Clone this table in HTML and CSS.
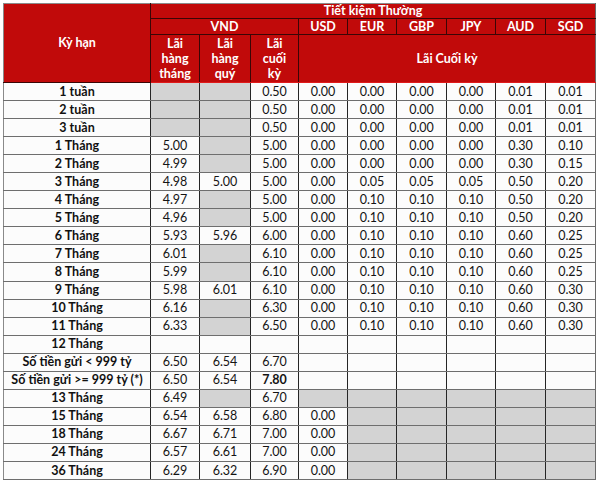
FILE: index.html
```html
<!DOCTYPE html>
<html lang="vi">
<head>
<meta charset="utf-8">
<title>Lãi suất tiết kiệm</title>
<link rel="stylesheet" href="styles.css">
</head>
<body>
<table class="rates">
<colgroup>
<col class="c-term"><col class="c49"><col class="c51"><col class="c48"><col class="c49"><col class="c49"><col class="c50"><col class="c49"><col class="c50"><col class="c50">
</colgroup>
<thead>
<tr class="h1"><th rowspan="3" class="term-h">Kỳ hạn</th><th colspan="9">Tiết kiệm Thường</th></tr>
<tr class="h2"><th colspan="3">VND</th><th>USD</th><th>EUR</th><th>GBP</th><th>JPY</th><th>AUD</th><th>SGD</th></tr>
<tr class="h3"><th>Lãi<br>hàng<br>tháng</th><th>Lãi<br>hàng<br>quý</th><th>Lãi<br>cuối<br>kỳ</th><th colspan="6">Lãi Cuối kỳ</th></tr>
</thead>
<tbody>
<tr><td class="lbl">1 tuần</td><td class="g"></td><td class="g"></td><td>0.50</td><td>0.00</td><td>0.00</td><td>0.00</td><td>0.00</td><td>0.01</td><td>0.01</td></tr>
<tr><td class="lbl">2 tuần</td><td class="g"></td><td class="g"></td><td>0.50</td><td>0.00</td><td>0.00</td><td>0.00</td><td>0.00</td><td>0.01</td><td>0.01</td></tr>
<tr><td class="lbl">3 tuần</td><td class="g"></td><td class="g"></td><td>0.50</td><td>0.00</td><td>0.00</td><td>0.00</td><td>0.00</td><td>0.01</td><td>0.01</td></tr>
<tr><td class="lbl">1 Tháng</td><td>5.00</td><td class="g"></td><td>5.00</td><td>0.00</td><td>0.00</td><td>0.00</td><td>0.00</td><td>0.30</td><td>0.10</td></tr>
<tr><td class="lbl">2 Tháng</td><td>4.99</td><td class="g"></td><td>5.00</td><td>0.00</td><td>0.00</td><td>0.00</td><td>0.00</td><td>0.30</td><td>0.15</td></tr>
<tr><td class="lbl">3 Tháng</td><td>4.98</td><td>5.00</td><td>5.00</td><td>0.00</td><td>0.05</td><td>0.05</td><td>0.05</td><td>0.50</td><td>0.20</td></tr>
<tr><td class="lbl">4 Tháng</td><td>4.97</td><td class="g"></td><td>5.00</td><td>0.00</td><td>0.10</td><td>0.10</td><td>0.10</td><td>0.50</td><td>0.20</td></tr>
<tr><td class="lbl">5 Tháng</td><td>4.96</td><td class="g"></td><td>5.00</td><td>0.00</td><td>0.10</td><td>0.10</td><td>0.10</td><td>0.50</td><td>0.20</td></tr>
<tr><td class="lbl">6 Tháng</td><td>5.93</td><td>5.96</td><td>6.00</td><td>0.00</td><td>0.10</td><td>0.10</td><td>0.10</td><td>0.60</td><td>0.25</td></tr>
<tr><td class="lbl">7 Tháng</td><td>6.01</td><td class="g"></td><td>6.10</td><td>0.00</td><td>0.10</td><td>0.10</td><td>0.10</td><td>0.60</td><td>0.25</td></tr>
<tr><td class="lbl">8 Tháng</td><td>5.99</td><td class="g"></td><td>6.10</td><td>0.00</td><td>0.10</td><td>0.10</td><td>0.10</td><td>0.60</td><td>0.25</td></tr>
<tr><td class="lbl">9 Tháng</td><td>5.98</td><td>6.01</td><td>6.10</td><td>0.00</td><td>0.10</td><td>0.10</td><td>0.10</td><td>0.60</td><td>0.30</td></tr>
<tr><td class="lbl">10 Tháng</td><td>6.16</td><td class="g"></td><td>6.30</td><td>0.00</td><td>0.10</td><td>0.10</td><td>0.10</td><td>0.60</td><td>0.30</td></tr>
<tr><td class="lbl">11 Tháng</td><td>6.33</td><td class="g"></td><td>6.50</td><td>0.00</td><td>0.10</td><td>0.10</td><td>0.10</td><td>0.60</td><td>0.30</td></tr>
<tr><td class="lbl">12 Tháng</td><td></td><td></td><td></td><td></td><td></td><td></td><td></td><td></td><td></td></tr>
<tr><td class="lbl">Số tiền gửi &lt; 999 tỷ</td><td>6.50</td><td>6.54</td><td>6.70</td><td></td><td></td><td></td><td></td><td></td><td></td></tr>
<tr><td class="lbl">Số tiền gửi &gt;= 999 tỷ (*)</td><td>6.50</td><td>6.54</td><td class="b">7.80</td><td></td><td></td><td></td><td></td><td></td><td></td></tr>
<tr><td class="lbl">13 Tháng</td><td>6.49</td><td class="g"></td><td>6.70</td><td class="g"></td><td class="g"></td><td class="g"></td><td class="g"></td><td class="g"></td><td class="g"></td></tr>
<tr><td class="lbl">15 Tháng</td><td>6.54</td><td>6.58</td><td>6.80</td><td>0.00</td><td class="g"></td><td class="g"></td><td class="g"></td><td class="g"></td><td class="g"></td></tr>
<tr><td class="lbl">18 Tháng</td><td>6.67</td><td>6.71</td><td>7.00</td><td>0.00</td><td class="g"></td><td class="g"></td><td class="g"></td><td class="g"></td><td class="g"></td></tr>
<tr><td class="lbl">24 Tháng</td><td>6.57</td><td>6.61</td><td>7.00</td><td>0.00</td><td class="g"></td><td class="g"></td><td class="g"></td><td class="g"></td><td class="g"></td></tr>
<tr><td class="lbl">36 Tháng</td><td>6.29</td><td>6.32</td><td>6.90</td><td>0.00</td><td class="g"></td><td class="g"></td><td class="g"></td><td class="g"></td><td class="g"></td></tr>
</tbody>
</table>
</body>
</html>
```
FILE: styles.css
```css
html, body {
  margin: 0;
  padding: 0;
  background: #ffffff;
}

body {
  padding: 3px 0 0 3px;
  font-family: Lato, "Liberation Sans", sans-serif;
  font-size: 12.5px;
  color: #141414;
}

.rates {
  border-collapse: collapse;
  table-layout: fixed;
  width: 592px;
}

.c-term { width: 147px; }
.c48 { width: 48px; }
.c49 { width: 49px; }
.c50 { width: 50px; }
.c51 { width: 51px; }

.rates th {
  background: #c10a0a;
  color: #ffffff;
  font-weight: 700;
  font-size: 12.5px;
  border: 1px solid #3a0606;
  padding: 0;
  text-align: center;
  vertical-align: middle;
  line-height: 15px;
}

.rates .term-h {
  border-left-color: #8a8a8a;
  border-top-color: #8a8a8a;
}

.h1 th {
  height: 14px;
  line-height: 14px;
  border-top-color: #8a8a8a;
}

.h1 th:last-child,
.h2 th:last-child,
.h3 th:last-child { border-right-color: #6a6a6a; }

.h2 th {
  height: 15px;
  line-height: 15px;
}

.h3 th {
  height: 47px;
  border-bottom-color: #e01a1a;
}

.rates td {
  height: 17.05px;
  padding: 0;
  text-align: center;
  vertical-align: middle;
  background: #fcfcfc;
  border-left: 1px solid #262626;
  border-right: 1px solid #262626;
  border-top: 1px solid #6e6e6e;
  border-bottom: 1px solid #6e6e6e;
  line-height: 16px;
  white-space: nowrap;
}

.rates td:first-child { border-left-color: #8a8a8a; }
.rates td:last-child { border-right-color: #6a6a6a; }

.rates td.lbl {
  font-weight: 700;
  color: #111111;
}

.rates td.g {
  background: #d3d3d3;
}

.rates td.b {
  font-weight: 700;
}
```
